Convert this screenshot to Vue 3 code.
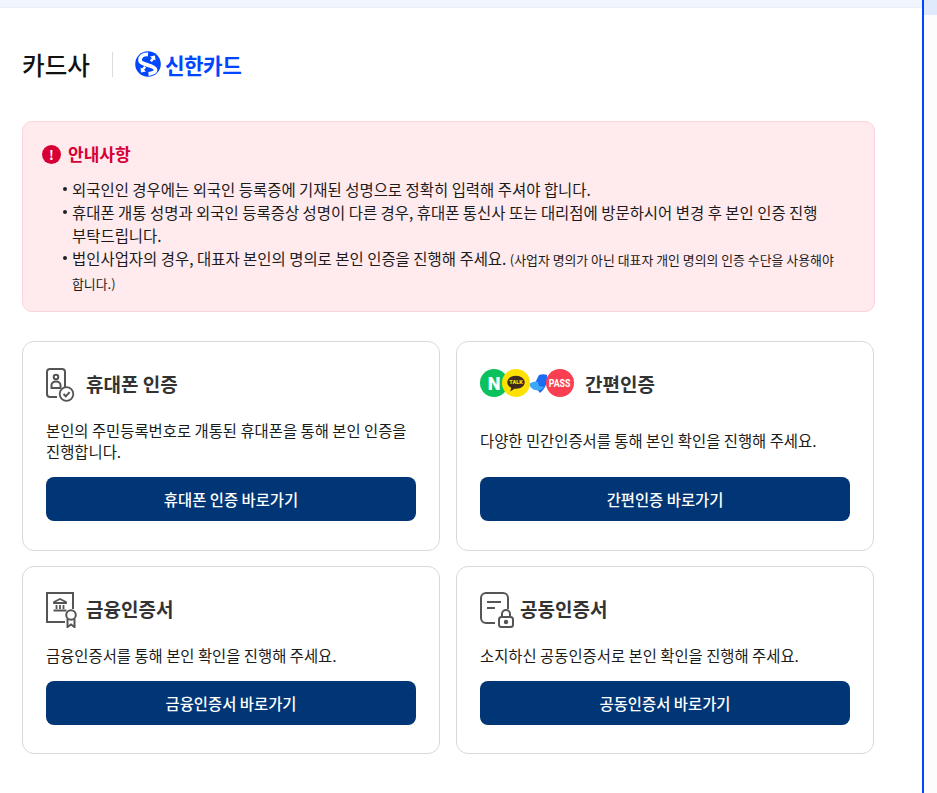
<template>
  <div class="page">
    <main class="main">
      <div class="top-band"></div>
      <header class="head">
        <h1 class="head-title">카드사</h1>
        <span class="head-line"></span>
        <div class="brand">
          <svg class="brand-mark" viewBox="0 0 26 26">
            <circle cx="13" cy="13" r="12.800" fill="#0046ff" />
            <path d="M13 3.500C8 3 5 5.500 5 9c0 5.500 14.500 4.500 15.500 9.500.3 2-2 4-7 4.500" fill="none" stroke="#fff" stroke-width="3.800" />
            <path d="M15 5.500l5-1 .5 5-1.600-1-2 2.500-2-1.500 2-2.500z" fill="#fff" />
            <path d="M15 5.500l5-1 .5 5-1.600-1-2 2.500-2-1.500 2-2.500z" fill="#fff" transform="rotate(180 13 13)" />
          </svg>
          <span class="brand-name">신한카드</span>
        </div>
      </header>

      <section class="notice">
        <div class="notice-title">
          <span class="notice-mark">!</span>
          <span>안내사항</span>
        </div>
        <ul class="notice-list">
          <li>외국인인 경우에는 외국인 등록증에 기재된 성명으로 정확히 입력해 주셔야 합니다.</li>
          <li>휴대폰 개통 성명과 외국인 등록증상 성명이 다른 경우, 휴대폰 통신사 또는 대리점에 방문하시어 변경 후 본인 인증 진행 부탁드립니다.</li>
          <li>법인사업자의 경우, 대표자 본인의 명의로 본인 인증을 진행해 주세요. <small>(사업자 명의가 아닌 대표자 개인 명의의 인증 수단을 사용해야 합니다.)</small></li>
        </ul>
      </section>

      <div class="cards">
        <article class="card tall">
          <div class="card-head">
            <svg class="icon" viewBox="0 0 34 36" fill="none" stroke="#555" stroke-width="2">
              <path d="M11 30H4a3 3 0 0 1-3-3V5a3 3 0 0 1 3-3h12a3 3 0 0 1 3 3v15" />
              <circle cx="10" cy="10" r="2.300" />
              <path d="M5.500 21v-3c0-2 2-3.500 4.500-3.500s4.500 1.500 4.500 3.500v3z" />
              <circle cx="20.500" cy="27" r="6.800" stroke-width="1.800" />
              <path d="M17.500 27l2.300 2.300 3.800-4.200" />
            </svg>
            <h2>휴대폰 인증</h2>
          </div>
          <p>본인의 주민등록번호로 개통된 휴대폰을 통해 본인 인증을 진행합니다.</p>
          <button class="go">휴대폰 인증 바로가기</button>
        </article>

        <article class="card tall">
          <div class="card-head">
            <div class="badges">
              <span class="badge naver">N</span>
              <span class="badge kakao">
                <svg viewBox="0 0 24 24"><path d="M12 4C6.500 4 2.500 7.200 2.500 11.200c0 2.600 1.700 4.800 4.300 6l-1 4 4.400-3c.6.100 1.200.1 1.800.1 5.500 0 9.500-3.200 9.500-7.100S17.500 4 12 4z" fill="#3c2a1e" /></svg>
                <b>TALK</b>
              </span>
              <span class="badge toss">
                <svg viewBox="0 0 28 28"><path d="M15 6c3-1 6-1 8 0 1 6-1 13-7 18l-6-8z" fill="#1a6cf5" /><path d="M5 15c3-2 6-3 9-2l1 4 5 1c-3 5-12 5-15-3z" fill="#3ea8f8" /></svg>
              </span>
              <span class="badge pass"><i>PASS</i></span>
            </div>
            <h2>간편인증</h2>
          </div>
          <p class="one-line">다양한 민간인증서를 통해 본인 확인을 진행해 주세요.</p>
          <button class="go">간편인증 바로가기</button>
        </article>

        <article class="card">
          <div class="card-head">
            <svg class="icon" viewBox="0 0 34 36" fill="none" stroke="#555" stroke-width="2">
              <path d="M19 30H1V1h26v16" />
              <path d="M8 10l6-3 6 3v1H8zM10.500 13v4M14 13v4M17.500 13v4M7.500 18.500h13" stroke-width="1.800" />
              <circle cx="25" cy="23" r="4.800" />
              <path d="M21.500 27v8l3.500-2.500 3.500 2.500v-8" />
            </svg>
            <h2>금융인증서</h2>
          </div>
          <p>금융인증서를 통해 본인 확인을 진행해 주세요.</p>
          <button class="go">금융인증서 바로가기</button>
        </article>

        <article class="card">
          <div class="card-head">
            <svg class="icon" viewBox="0 0 34 36" fill="none" stroke="#555" stroke-width="2">
              <path d="M15 31H6a5 5 0 0 1-5-5V6a5 5 0 0 1 5-5h17a5 5 0 0 1 5 5v11" />
              <path d="M7 10h14M7 16h8" />
              <rect x="19" y="25" width="14" height="10" rx="2.500" />
              <path d="M22 25v-3a4 4 0 0 1 8 0v3" />
              <circle cx="26" cy="30" r="1.200" fill="#555" />
            </svg>
            <h2>공동인증서</h2>
          </div>
          <p>소지하신 공동인증서로 본인 확인을 진행해 주세요.</p>
          <button class="go">공동인증서 바로가기</button>
        </article>
      </div>
    </main>
    <aside class="side">
      <div class="side-top"></div>
    </aside>
  </div>
</template>

<script setup>
</script>

<style scoped>
.page {
  display: flex;
  width: 937px;
  height: 793px;
  overflow: hidden;
  background: #fff;
  color: #111;
  font-family: "Noto Sans CJK KR", "Noto Sans", sans-serif;
}

.main {
  width: 922px;
  flex: none;
  box-sizing: border-box;
  padding: 0 47px 0 22px;
}

.top-band {
  height: 7px;
  margin: 0 -47px 0 -22px;
  background: #f1f5fd;
  border-bottom: 1px solid #eaeef5;
}

.head {
  display: flex;
  align-items: center;
  height: 26px;
  margin-top: 43px;
}

.head-title {
  margin: 0;
  font-size: 24.6px;
  font-weight: 500;
  color: #111;
}

.head-line {
  width: 1px;
  height: 25px;
  margin: 0 22px 0 22px;
  background: #dcdcdc;
}

.brand {
  display: flex;
  align-items: center;
  gap: 4px;
}

.brand-mark {
  width: 26px;
  height: 26px;
}

.brand-name {
  font-size: 21.3px;
  font-weight: 700;
  color: #0046ff;
  letter-spacing: -0.5px;
}

.notice {
  box-sizing: border-box;
  width: 853px;
  height: 191px;
  margin-top: 44px;
  padding: 20px 19px;
  background: #ffeaee;
  border: 1px solid #fbd3dc;
  border-radius: 10px;
}

.notice-title {
  display: flex;
  align-items: center;
  gap: 7px;
  font-size: 17px;
  font-weight: 700;
  line-height: 24px;
  color: #d70036;
}

.notice-mark {
  width: 19px;
  height: 19px;
  border-radius: 50%;
  background: #d70036;
  color: #fff;
  font-size: 13px;
  line-height: 19px;
  text-align: center;
}

.notice-list {
  margin: 12px 0 0;
  padding: 0 20px 0 30px;
  list-style: none;
  font-size: 15.46px;
  line-height: 23px;
  color: #1b1b1b;
  word-break: keep-all;
}

.notice-list li {
  position: relative;
}

.notice-list li::before {
  content: "";
  position: absolute;
  left: -9px;
  top: 9px;
  width: 4px;
  height: 4px;
  border-radius: 50%;
  background: #222;
}

.notice-list small {
  font-size: 12.9px;
}

.cards {
  display: grid;
  grid-template-columns: 418px 418px;
  gap: 15px 16px;
  margin-top: 29px;
}

.card {
  box-sizing: border-box;
  height: 188px;
  padding: 21px 23px 28px;
  display: flex;
  flex-direction: column;
  background: #fff;
  border: 1px solid #d9d9d9;
  border-radius: 12px;
}

.card.tall {
  height: 210px;
  padding-bottom: 29px;
}

.card-head {
  display: flex;
  align-items: center;
  gap: 6px;
  height: 40px;
}

.card-head h2 {
  margin: 0;
  font-size: 19px;
  font-weight: 700;
  color: #333;
}

.icon {
  width: 34px;
  height: 36px;
  margin-top: 4px;
  flex: none;
}

.badges {
  display: flex;
  align-items: center;
  margin-right: 5px;
}

.badge {
  position: relative;
  display: flex;
  align-items: center;
  justify-content: center;
  width: 28px;
  height: 28px;
  border-radius: 50%;
  margin-right: -6px;
  font-family: "Roboto", "Liberation Sans", sans-serif;
  font-weight: 700;
}

.badge.pass {
  margin-right: 0;
}

.naver {
  background: #0bc15c;
  color: #fff;
  font-size: 18px;
  font-weight: 900;
}

.kakao {
  z-index: 1;
  background: #fee100;
}

.kakao svg {
  position: absolute;
  width: 22px;
  height: 22px;
}

.kakao b {
  position: relative;
  top: -1px;
  font-size: 5.500px;
  color: #fee100;
}

.toss {
  background: #fff;
}

.toss svg {
  width: 28px;
  height: 28px;
}

.pass {
  background: #fb3f52;
  color: #fff;
  font-size: 11px;
}

.pass i {
  font-style: normal;
  transform: scaleX(0.8);
}

.card p {
  margin: 17px 0 0;
  font-size: 15.4px;
  line-height: 21px;
  color: #1b1b1b;
}

.card p.one-line {
  margin-top: 27px;
}

.go {
  height: 44px;
  margin-top: auto;
  border: 0;
  border-radius: 8px;
  background: #003675;
  color: #fff;
  font-family: inherit;
  font-size: 15.4px;
  font-weight: 500;
}

.side {
  width: 15px;
  flex: none;
  background: #fcfcfd;
  border-left: 2px solid #0046ff;
}

.side-top {
  height: 15px;
  background: #dfeafc;
}
</style>
